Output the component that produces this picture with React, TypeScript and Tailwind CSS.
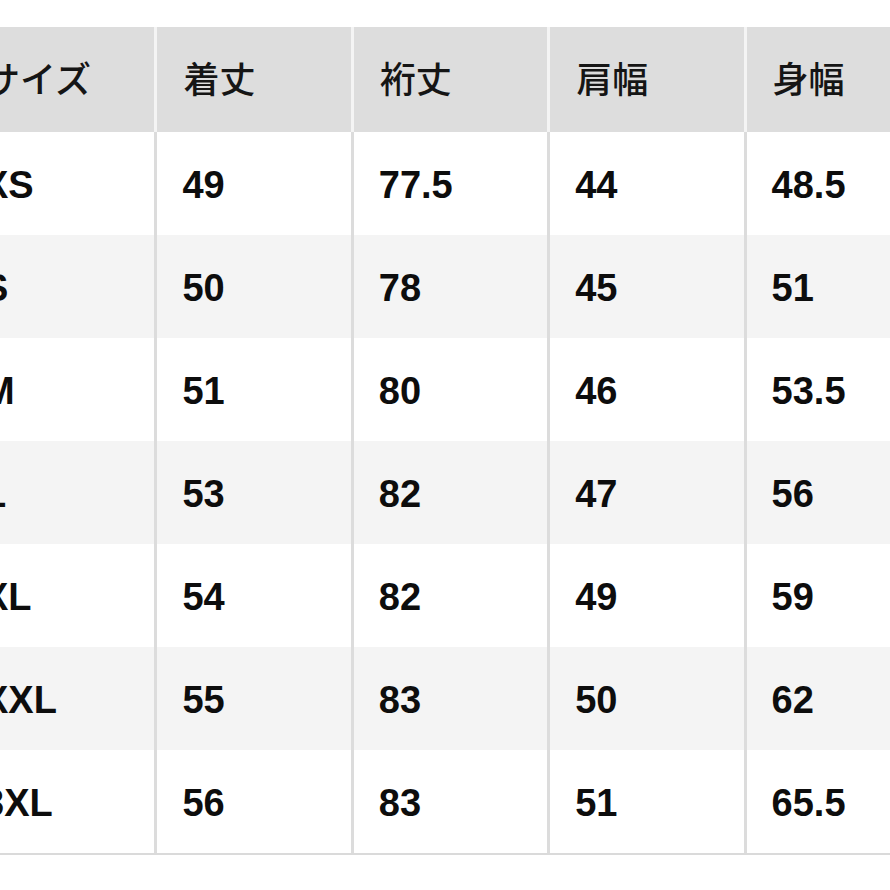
import React from "react";

const headers = ["サイズ", "着丈", "裄丈", "肩幅", "身幅"];

const rows: string[][] = [
  ["XS", "49", "77.5", "44", "48.5"],
  ["S", "50", "78", "45", "51"],
  ["M", "51", "80", "46", "53.5"],
  ["L", "53", "82", "47", "56"],
  ["XL", "54", "82", "49", "59"],
  ["XXL", "55", "83", "50", "62"],
  ["3XL", "56", "83", "51", "65.5"],
];

export default function App() {
  return (
    <div className="w-[890px] h-[890px] overflow-hidden bg-white">
      <div className="ml-[-42px] mt-[27px] w-[1000px] border-b-2 border-[#dadada]">
        {/* header */}
        <div className="flex h-[105px] bg-[#dddddd]">
          {headers.map((h, i) => (
            <div
              key={h}
              className={
                "w-[196.4px] shrink-0 flex items-center pl-[26px] pb-[6px] text-[36px] font-medium text-[#151515] " +
                (i > 0 ? "border-l-[3px] border-[#f4f4f4]" : "")
              }
              style={{ fontFamily: '"Noto Sans CJK JP", "Noto Sans", sans-serif' }}
            >
              {h}
            </div>
          ))}
        </div>
        {/* body */}
        {rows.map((r, ri) => (
          <div key={ri} className={"flex h-[103px] " + (ri % 2 === 1 ? "bg-[#f4f4f4]" : "bg-white")}>
            {r.map((c, ci) => (
              <div
                key={ci}
                className={
                  "w-[196.4px] shrink-0 flex items-center pl-[25px] pt-[4px] text-[38px] font-bold text-[#0d0d0d] " +
                  (ci > 0 ? "border-l-[3px] border-[#dcdcdc]" : "")
                }
                style={{ fontFamily: '"Liberation Sans", Arial, sans-serif' }}
              >
                {c}
              </div>
            ))}
          </div>
        ))}
      </div>
    </div>
  );
}
